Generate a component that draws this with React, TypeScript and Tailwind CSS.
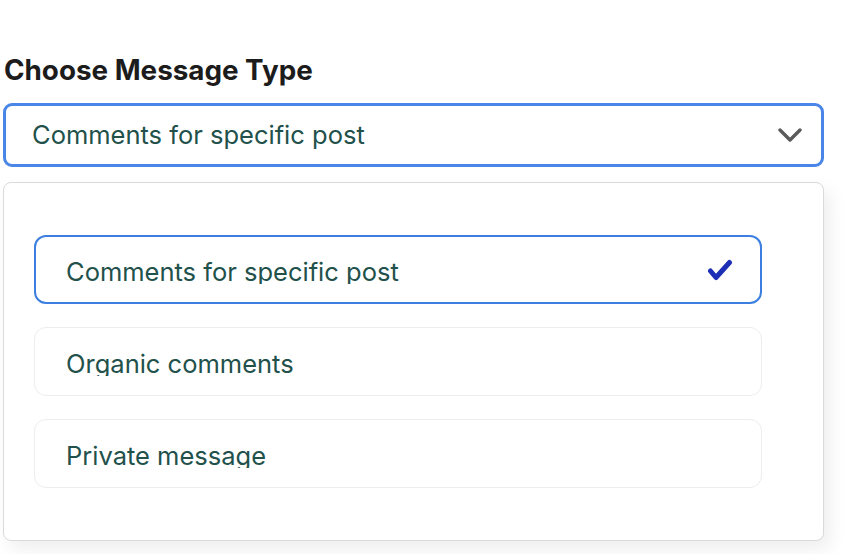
import React from "react";

const font = { fontFamily: "Inter, 'Noto Sans', sans-serif" };

function Check() {
  return (
    <svg width="26" height="22" viewBox="0 0 26 22" className="shrink-0">
      <path d="M3.5 12 L9 18.5 L22.5 3.5" fill="none" stroke="#1d2fb5" strokeWidth="5" strokeLinecap="round" strokeLinejoin="round" />
    </svg>
  );
}

function Chevron() {
  return (
    <svg width="24" height="16" viewBox="0 0 24 16" className="shrink-0">
      <path d="M2 3 L12 13 L22 3" fill="none" stroke="#5a5a5a" strokeWidth="3.4" strokeLinecap="round" strokeLinejoin="round" />
    </svg>
  );
}

function Option({ label, selected }: { label: string; selected?: boolean }) {
  return (
    <div
      className={
        selected
          ? "flex h-[69px] items-center justify-between rounded-[12px] border-2 border-[#3d7fe0] pl-[30px] pr-[27px]"
          : "flex h-[69px] items-center justify-between rounded-[12px] border border-[#ededed] pl-[31px] pr-[28px]"
      }
    >
      <span className="block h-[29px] overflow-hidden text-[25.5px] leading-[34px] text-[#22514b]">{label}</span>
      {selected && <Check />}
    </div>
  );
}

export default function App() {
  return (
    <div className="h-[554px] w-[852px] overflow-hidden bg-white pt-[54px]" style={font}>
      <h2 className="pl-[4px] text-[27.8px] font-bold leading-[33px] text-[#1c1c1c]">Choose Message Type</h2>
      <div className="ml-[3px] mt-[16px] flex h-[64px] w-[821px] items-center justify-between rounded-[9px] border-[3px] border-[#4a86e8] pl-[26px] pr-[19px]">
        <span className="text-[25.5px] leading-[34px] text-[#22514b]">Comments for specific post</span>
        <Chevron />
      </div>
      <div className="ml-[3px] mt-[15px] flex h-[359px] w-[821px] flex-col gap-[23px] rounded-[8px] border border-[#dadada] bg-white pb-[52px] pl-[30px] pr-[61px] pt-[52px] shadow-[6px_8px_18px_rgba(0,0,0,0.07)]">
        <Option label="Comments for specific post" selected />
        <Option label="Organic comments" />
        <Option label="Private message" />
      </div>
    </div>
  );
}
